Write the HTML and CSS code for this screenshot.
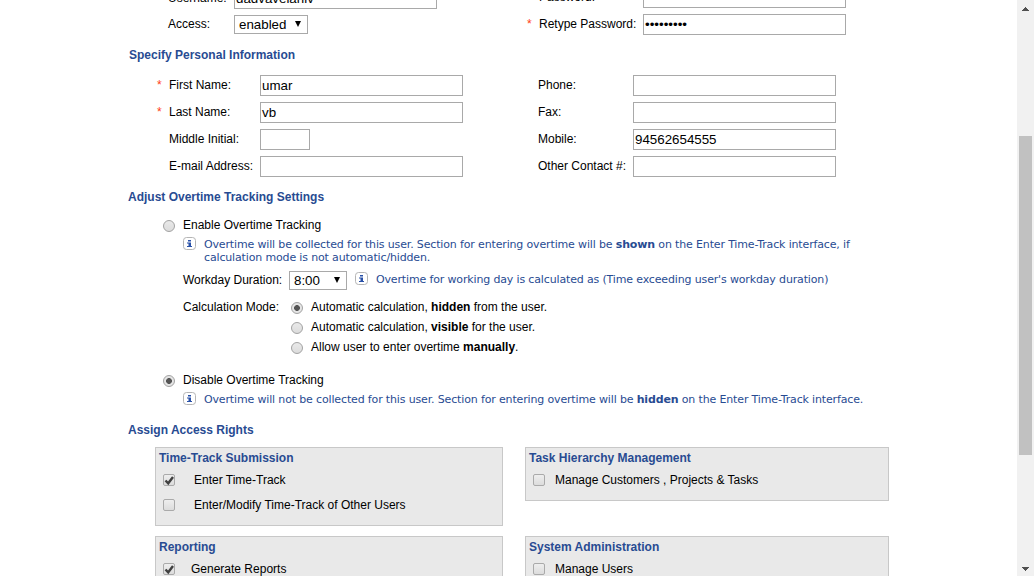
FILE: index.html
```html
<!DOCTYPE html>
<html lang="en">
<head>
<meta charset="utf-8">
<title>User Settings</title>
<link rel="stylesheet" href="styles.css">
</head>
<body>
<svg class="defs" width="0" height="0">
  <symbol id="info" viewBox="0 0 13 13"><rect x=".5" y=".5" width="12" height="12" rx="3" fill="#fff" stroke="#b5b5b5"/><path d="M5 3h3v1.5H5zM4 5.5h4V9h1v1H4V9h1.500V6.500H4z" fill="#2850a8"/></symbol>
  <symbol id="tick" viewBox="0 0 12 12"><path d="M1.500 5.500L4.200 8.300 9 2" fill="none" stroke="#404040" stroke-width="2.400"/></symbol>
</svg>
<main class="page">
  <section class="account">
    <div class="account-left">
      <div class="row"><span class="label">Username:</span><span class="input">dadvaveianiv</span></div>
      <div class="row"><span class="label">Access:</span><span class="select">enabled<svg class="arrow" viewBox="0 0 6 6"><path d="M0 0h6L3 6z"/></svg></span></div>
    </div>
    <div class="account-right">
      <div class="row"><span class="star"></span><span class="label">Password:</span><span class="input"></span></div>
      <div class="row"><span class="star">*</span><span class="label">Retype Password:</span><span class="input">•••••••••</span></div>
    </div>
  </section>

  <h2 class="heading personal-heading">Specify Personal Information</h2>
  <section class="personal">
    <div class="personal-left">
      <div class="row"><span class="star">*</span><span class="label">First Name:</span><span class="input">umar</span></div>
      <div class="row"><span class="star">*</span><span class="label">Last Name:</span><span class="input">vb</span></div>
      <div class="row"><span class="star"></span><span class="label">Middle Initial:</span><span class="input short"></span></div>
      <div class="row"><span class="star"></span><span class="label">E-mail Address:</span><span class="input"></span></div>
    </div>
    <div class="personal-right">
      <div class="row"><span class="label">Phone:</span><span class="input"></span></div>
      <div class="row"><span class="label">Fax:</span><span class="input"></span></div>
      <div class="row"><span class="label">Mobile:</span><span class="input">94562654555</span></div>
      <div class="row"><span class="label">Other Contact #:</span><span class="input"></span></div>
    </div>
  </section>

  <h2 class="heading overtime-heading">Adjust Overtime Tracking Settings</h2>
  <section class="overtime">
    <div class="option"><i class="radio"></i><span>Enable Overtime Tracking</span></div>
    <div class="note"><svg class="info"><use href="#info"/></svg><p class="hint">Overtime will be collected for this user. Section for entering overtime will be <b>shown</b> on the Enter Time-Track interface, if<br>calculation mode is not automatic/hidden.</p></div>
    <div class="duration"><span class="duration-label">Workday Duration:</span><span class="select time">8:00<svg class="arrow" viewBox="0 0 6 6"><path d="M0 0h6L3 6z"/></svg></span><svg class="info"><use href="#info"/></svg><p class="hint">Overtime for working day is calculated as (Time exceeding user's workday duration)</p></div>
    <div class="calculation">
      <span class="calculation-label">Calculation Mode:</span>
      <div class="modes">
        <div class="mode"><i class="radio checked"></i><span>Automatic calculation, <b>hidden</b> from the user.</span></div>
        <div class="mode"><i class="radio"></i><span>Automatic calculation, <b>visible</b> for the user.</span></div>
        <div class="mode"><i class="radio"></i><span>Allow user to enter overtime <b>manually</b>.</span></div>
      </div>
    </div>
    <div class="option"><i class="radio checked"></i><span>Disable Overtime Tracking</span></div>
    <div class="note"><svg class="info"><use href="#info"/></svg><p class="hint">Overtime will not be collected for this user. Section for entering overtime will be <b>hidden</b> on the Enter Time-Track interface.</p></div>
  </section>

  <h2 class="heading rights-heading">Assign Access Rights</h2>
  <section class="rights">
    <div class="panel">
      <h3 class="panel-title">Time-Track Submission</h3>
      <div class="permission"><svg class="checkbox"><use href="#tick" width="12" height="12"/></svg><span>Enter Time-Track</span></div>
      <div class="permission"><svg class="checkbox"></svg><span>Enter/Modify Time-Track of Other Users</span></div>
    </div>
    <div class="panel compact">
      <h3 class="panel-title">Task Hierarchy Management</h3>
      <div class="permission"><svg class="checkbox"></svg><span>Manage Customers , Projects &amp; Tasks</span></div>
    </div>
    <div class="panel reporting">
      <h3 class="panel-title">Reporting</h3>
      <div class="permission"><svg class="checkbox"><use href="#tick" width="12" height="12"/></svg><span>Generate Reports</span></div>
    </div>
    <div class="panel compact">
      <h3 class="panel-title">System Administration</h3>
      <div class="permission"><svg class="checkbox"></svg><span>Manage Users</span></div>
    </div>
  </section>
</main>
<aside class="scrollbar">
  <svg class="scroll-arrow" viewBox="0 0 7 4" shape-rendering="crispEdges"><path d="M0 4L3.500 0 7 4z"/></svg>
  <div class="track"><div class="thumb"></div></div>
  <svg class="scroll-arrow" viewBox="0 0 7 4" shape-rendering="crispEdges"><path d="M0 0L3.500 4 7 0z"/></svg>
</aside>
</body>
</html>
```

FILE: styles.css
```css
* { box-sizing: border-box; }
body { margin: 0; height: 576px; display: flex; overflow: hidden; background: #fff; color: #000; font: 12px/16px "Liberation Sans", Arial, sans-serif; white-space: nowrap; }
h2, h3, p { margin: 0; }
svg { display: block; flex: none; }
.defs { position: absolute; }
.page { width: 1017px; height: 576px; overflow: hidden; }

.row { display: flex; align-items: center; height: 27px; }
.label { flex: none; padding-bottom: 2px; }
.star { width: 12px; flex: none; color: #ff3c14; font-size: 12px; padding-bottom: 1px; }
.input { width: 203px; height: 21px; flex: none; border: 1px solid #a9a9a9; background: #fff; padding-left: 1px; font-size: 13.333px; line-height: 20px; }
.input.short { width: 50px; }
.select { display: flex; align-items: center; width: 74px; height: 19px; border: 1px solid #a9a9a9; padding: 0 6px 0 4px; justify-content: space-between; font-size: 13.333px; }
.arrow { width: 6px; height: 6px; margin-bottom: 1px; }

.account { display: flex; height: 38px; align-items: flex-end; }
.account-left { width: 359px; margin-left: 168px; }
.account-left .label { width: 66px; }
.account-left .row:first-child { margin-bottom: -1px; }
.account-right .label { width: 104px; }

.heading { height: 34px; padding-left: 128px; color: #284b92; font-size: 12px; line-height: 34px; }
.personal-heading { padding-left: 129px; }
.personal { display: flex; }
.personal-left { width: 381px; margin-left: 157px; }
.personal-left .label { width: 91px; }
.personal-right .label { width: 95px; }

.radio { width: 12px; height: 12px; flex: none; border: 1px solid #a2a2a2; border-radius: 50%; background: linear-gradient(#e9e9e9, #dcdcdc); margin-top: 2px; }
.radio.checked { background: radial-gradient(circle, #555 0 2.600px, #e5e5e5 3.200px); }
.overtime { height: 199px; padding-left: 163px; }
.option { display: flex; align-items: center; height: 22px; gap: 8px; }
.note { display: flex; padding: 1px 0 0 20px; }
.info { width: 13px; height: 13px; }
.hint { margin-left: 8px; padding-top: 1px; color: #284b92; font: 11px/13px "DejaVu Sans", Verdana, sans-serif; letter-spacing: -0.150px; }
.duration { display: flex; height: 35px; padding: 8px 0 0 20px; }
.duration-label { width: 106px; }
.time { width: 58px; margin: -1px 8px 0 0; }
.calculation { display: flex; height: 70px; padding-left: 20px; }
.calculation-label { width: 108px; }
.modes { margin-top: -2px; }
.mode { display: flex; align-items: center; height: 20px; gap: 8px; }

.rights { display: grid; grid-template-columns: 348px 364px; grid-template-rows: 79px 79px; gap: 10px 22px; padding-left: 155px; align-items: start; }
.panel { height: 79px; border: 1px solid #c8c8c8; background: #e9e9e9; }
.panel.compact { height: 54px; }
.panel-title { height: 19px; padding-left: 3px; color: #284b92; font-size: 12px; line-height: 21px; }
.permission { display: flex; align-items: center; height: 25px; padding-left: 7px; gap: 19px; }
.reporting .permission { gap: 16px; }
.compact .permission { gap: 10px; }
.checkbox { width: 12px; height: 12px; border: 1px solid #aaa; border-radius: 2px; background: linear-gradient(#eee, #dcdcdc); overflow: visible; }

.scrollbar { width: 17px; height: 576px; flex: none; display: flex; flex-direction: column; align-items: center; background: #f1f1f1; padding: 7px 0 5px; }
.scroll-arrow { width: 7px; height: 4px; fill: #505050; }
.track { flex: 1; width: 13px; padding-top: 125px; }
.thumb { height: 319px; background: #c1c1c1; }
```
